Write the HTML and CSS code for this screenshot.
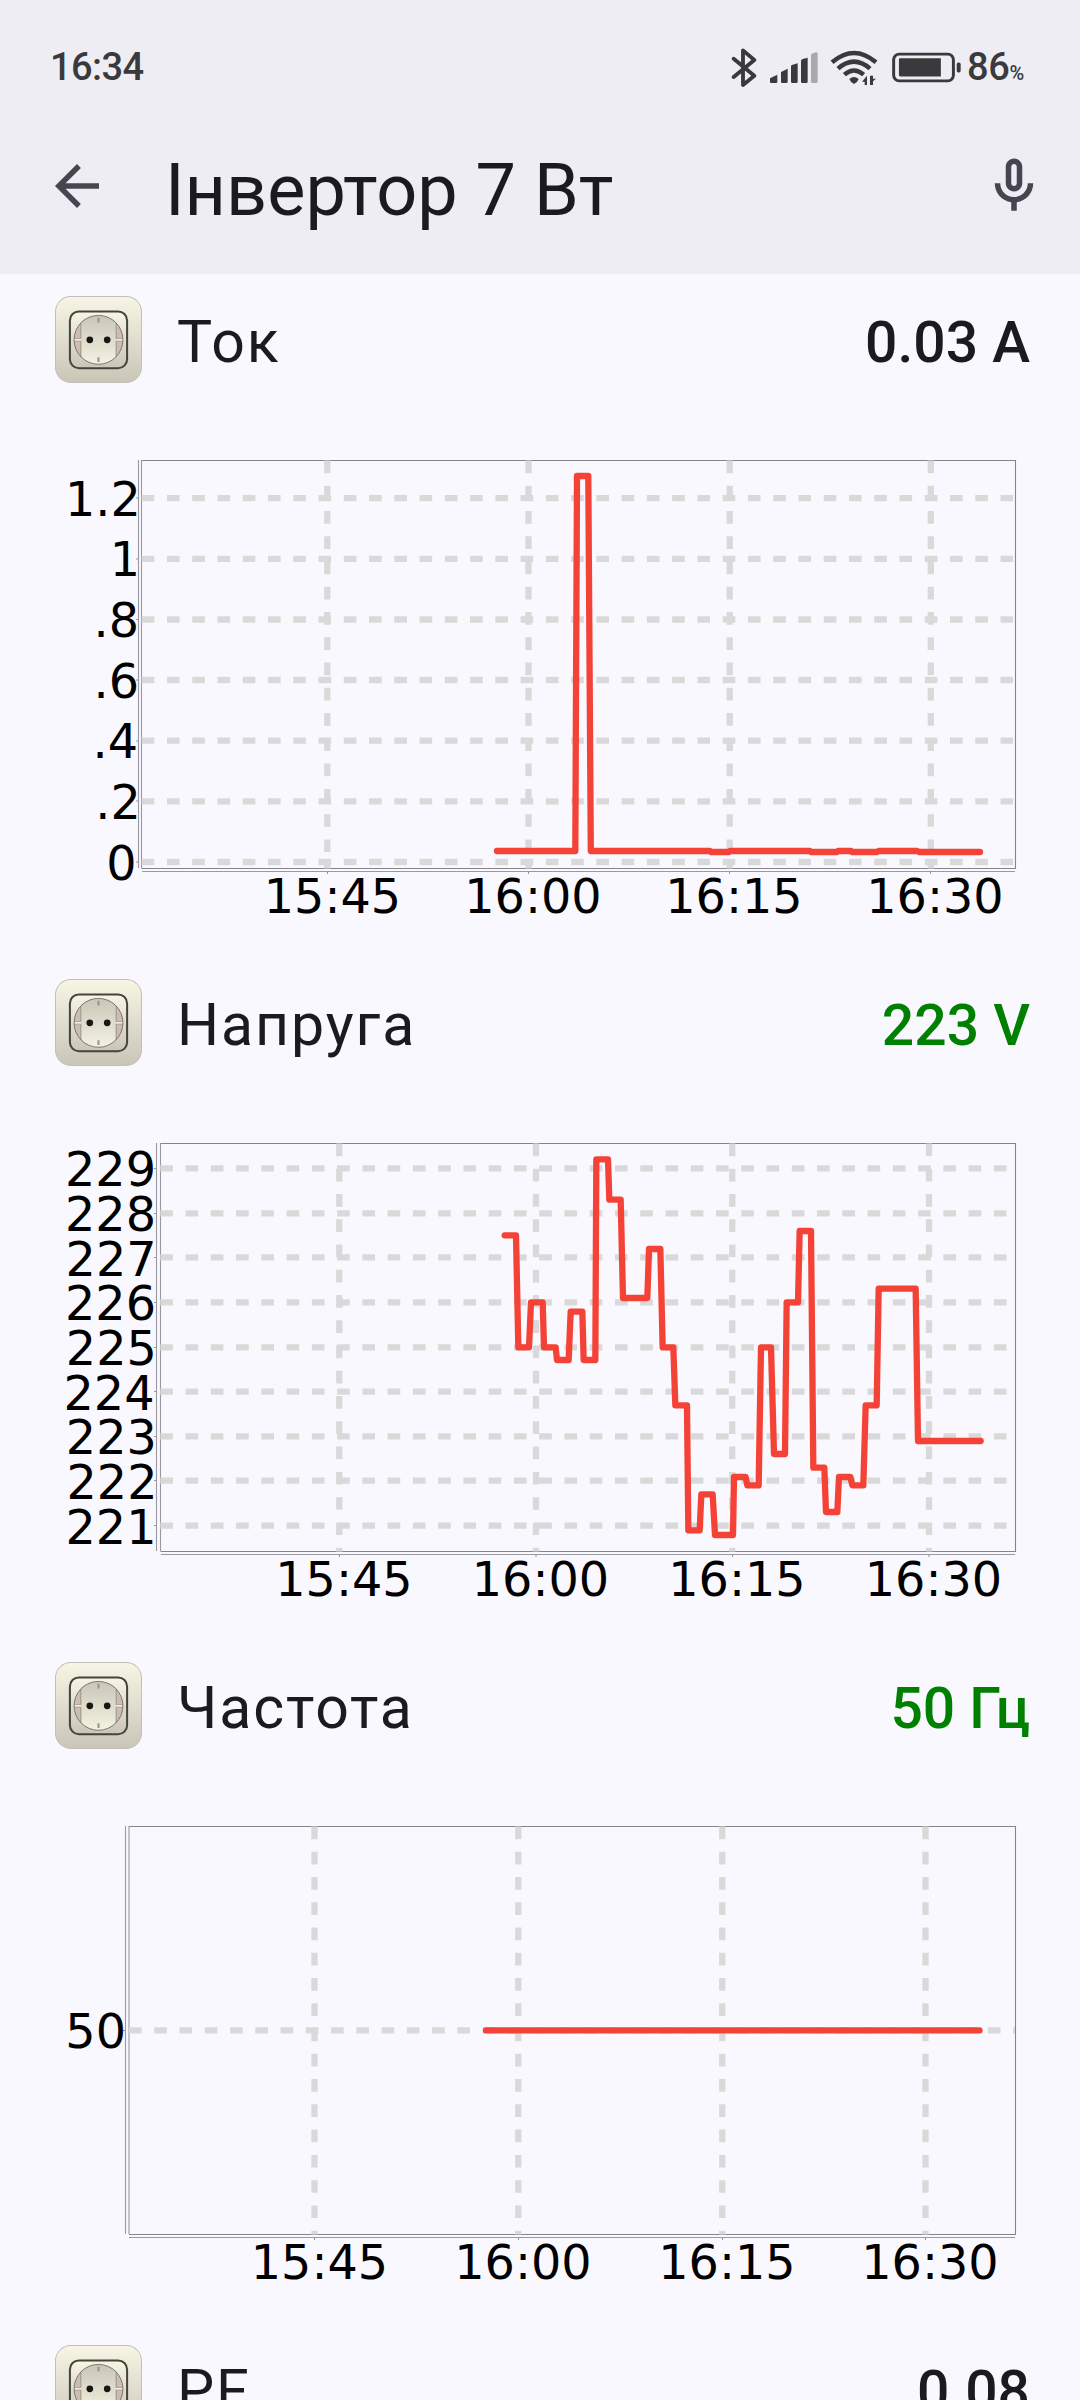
FILE: index.html
```
<!DOCTYPE html>
<html lang="uk">
<head>
<meta charset="utf-8">
<title>Інвертор 7 Вт</title>
<link rel="stylesheet" href="styles.css">
</head>
<body>
<svg class="defs" width="0" height="0" aria-hidden="true">
  <defs>
    <linearGradient id="plate" x1="0" y1="0" x2="0" y2="1"><stop offset="0" stop-color="#f7f5e4"/><stop offset="1" stop-color="#c9c6b8"/></linearGradient>
    <linearGradient id="well" x1="0" y1="0" x2="0" y2="1"><stop offset="0" stop-color="#c9c6b8"/><stop offset="1" stop-color="#f4f2e1"/></linearGradient>
    <clipPath id="round"><circle cx="130" cy="131" r="73"/></clipPath>
    <symbol id="socket" viewBox="0 0 260 260">
      <rect x="1.5" y="1.5" width="257" height="257" rx="46" fill="url(#plate)" stroke="#c4beb8" stroke-width="3"/>
      <rect x="44.500" y="46" width="171" height="170" rx="27" fill="url(#plate)" stroke="#46433a" stroke-width="6"/>
      <g clip-path="url(#round)">
        <rect x="57" y="58" width="146" height="146" fill="#cbbdb0"/>
        <path d="M77 58v146M183 58v146" stroke="#aaa192" stroke-width="3"/>
        <rect x="79" y="58" width="102" height="146" fill="url(#well)"/>
        <path d="M57 131h22M181 131h22" stroke="#f0edde" stroke-width="5"/>
        <path d="M57 127h20v-60M57 135h20v60M203 127h-20v-60M203 135h-20v60" fill="none" stroke="#a69c8f" stroke-width="2"/>
      </g>
      <circle cx="130" cy="131" r="73" fill="none" stroke="#6b665c" stroke-width="2.500"/>
      <path d="M130 65v14M130 183v14" stroke="#96938e" stroke-width="6"/>
      <circle cx="104" cy="131" r="10" fill="#171717"/><circle cx="156" cy="131" r="10" fill="#171717"/>
    </symbol>
  </defs>
</svg>

<header class="top">
  <div class="status">
    <span class="clock">16:34</span>
    <div class="indicators">
      <svg class="bt" viewBox="90 45 78 123"><path d="M98 80L160 131L126 159V55L160 84L98 135" fill="none" stroke="#3a3a3c" stroke-width="11.500" stroke-linejoin="round" stroke-linecap="round"/></svg>
      <svg class="signal" viewBox="205 60 147 99"><g fill="#3a3a3c"><path d="M208 142l22-11v21q0 4-4 4h-14q-4 0-4-4z"/><path d="M241 123l20-10v39q0 4-4 4h-12q-4 0-4-4z"/><path d="M271 105q0-3 5-4l15-4v55q0 4-4 4h-12q-4 0-4-4z"/><path d="M301 90q0-4 5-6l15-4v72q0 4-4 4h-12q-4 0-4-4z"/></g><path d="M331 74q0-5 5-7l10-3q5 0 5 3v85q0 4-4 4h-12q-4 0-4-4z" fill="#a9a9ac"/></svg>
      <svg class="wifi" viewBox="387 54 144 111"><g fill="none" stroke="#3a3a3c" stroke-width="13.500"><path d="M393 94Q459 38 525 94"/><path d="M411 113Q459 71 507 113"/><path d="M430 131Q459 106 488 131"/></g><path d="M445 144q14-12 28 0q-2 8-14 15q-12-7-14-15z" fill="#3a3a3c"/><path d="M498 134v28h-7v-10h-8zM507 162v-28h9v9h9l-9 8v11z" fill="#3a3a3c"/></svg>
      <svg class="battery" viewBox="572 62 209 92"><rect x="577" y="67.500" width="181" height="81" rx="17" fill="none" stroke="#3a3a3c" stroke-width="9"/><path d="M597 80h123v55h-123q-4 0-4-4v-47q0-4 4-4z" fill="#3a3a3c"/><rect x="768" y="93" width="12" height="30" rx="5" fill="#3a3a3c"/></svg>
      <span class="level">86<small>%</small></span>
    </div>
  </div>
  <div class="appbar">
    <svg class="icon" viewBox="0 0 24 24"><path d="M20 11H7.830l5.590-5.590L12 4l-8 8 8 8 1.410-1.410L7.830 13H20v-2z"/></svg>
    <h1>Інвертор 7 Вт</h1>
    <svg class="icon" viewBox="0 0 24 24"><path d="M12 14c1.660 0 3-1.340 3-3V5c0-1.660-1.340-3-3-3S9 3.340 9 5v6c0 1.660 1.340 3 3 3zm-1-9c0-.55.45-1 1-1s1 .45 1 1v6c0 .55-.45 1-1 1s-1-.45-1-1V5zm6 6c0 2.760-2.240 5-5 5s-5-2.240-5-5H5c0 3.530 2.610 6.430 6 6.920V21h2v-3.080c3.390-.49 6-3.390 6-6.920h-2z"/></svg>
  </div>
</header>

<main>
  <section class="item">
    <div class="row"><svg class="socket"><use href="#socket"/></svg><h2>Ток</h2><span class="value">0.03 A</span></div>
    <svg class="chart" viewBox="0 405 1080 552">
      <path class="frame" d="M141.500 460.500H1015.500V868.500H141.500"/>
      <path class="axis" d="M138.500 460V868M141.500 460V868M142 871.500H1015M136 498h2M136 559h2M136 619.500h2M136 680h2M136 741h2M136 801h2M136 862h2M327.500 871v3M528.500 871v3M729.500 871v3M930.500 871v3"/>
      <path class="grid" d="M141.700 498.200H1015M141.700 558.800H1015M141.700 619.500H1015M141.700 680H1015M141.700 740.700H1015M141.700 801.300H1015M141.700 862H1015M327.300 460.500V868.500M528.500 460.500V868.500M729.700 460.500V868.500M930.800 460.500V868.500"/>
      <path class="series" d="M497 851H575.300L577 476H588.300L590.800 851H710L711 852H729L730 851H810L811 852H837L838 851H851L852 852H877L878.500 851H917.500L919 852H980"/>
      <g class="ylab"><text x="140.800" y="515.700">1.2</text><text x="140" y="576">1</text><text x="139" y="637">.8</text><text x="139" y="697.500">.6</text><text x="138" y="757.700">.4</text><text x="140.800" y="818.700">.2</text><text x="136.500" y="879.500">0</text></g>
      <g class="xlab"><text x="332.500" y="912.700">15:45</text><text x="533" y="912.700">16:00</text><text x="734" y="912.700">16:15</text><text x="935" y="912.700">16:30</text></g>
    </svg>
  </section>

  <section class="item">
    <div class="row"><svg class="socket"><use href="#socket"/></svg><h2>Напруга</h2><span class="value ok">223 V</span></div>
    <svg class="chart" viewBox="0 1088 1080 552">
      <path class="frame" d="M160.500 1143.500H1015.500V1551.500H160.500"/>
      <path class="axis" d="M156.500 1143V1551M160.500 1143V1551M161 1554.500H1015M154 1168.500h2M154 1213.500h2M154 1257.500h2M154 1302.500h2M154 1347.500h2M154 1391.500h2M154 1436.500h2M154 1480.500h2M154 1525.500h2M339.500 1554v3M536 1554v3M732.500 1554v3M929 1554v3"/>
      <path class="grid" d="M160.300 1168.300H1015M160.300 1213.300H1015M160.300 1257.300H1015M160.300 1302.300H1015M160.300 1347.300H1015M160.300 1391.700H1015M160.300 1436.300H1015M160.300 1480.700H1015M160.300 1525.700H1015M339.300 1143.500V1551.500M536 1143.500V1551.500M732.300 1143.500V1551.500M929 1143.500V1551.500"/>
      <g transform="translate(540 1120) scale(.33333)"><path class="series fine" d="M-106 346H-72L-65 682H-33L-27 547H8L12 682H47L51 720H86L92 575H127L131 720H166L169 118H204L208 239H242L249 534H322L327 387H361L368 682H400L406 856H441L445 1231H479L484 1123H518L525 1245H579L582 1071H617L622 1096H656L663 682H693L702 1002H735L740 547H774L779 333H813L820 1043H853L858 1176H892L897 1071H931L937 1096H970L977 856H1010L1016 506H1127L1134 963H1322"/></g>
      <g class="ylab"><text x="156" y="1186.300">229</text><text x="156" y="1231">228</text><text x="156.600" y="1275.500">227</text><text x="156" y="1320.300">226</text><text x="156.900" y="1365">225</text><text x="154.500" y="1409.500">224</text><text x="156.900" y="1454.300">223</text><text x="157.500" y="1498.700">222</text><text x="156.500" y="1543.500">221</text></g>
      <g class="xlab"><text x="344" y="1596">15:45</text><text x="540.500" y="1596">16:00</text><text x="737" y="1596">16:15</text><text x="933.500" y="1596">16:30</text></g>
    </svg>
  </section>

  <section class="item">
    <div class="row"><svg class="socket"><use href="#socket"/></svg><h2>Частота</h2><span class="value ok">50 Гц</span></div>
    <svg class="chart" viewBox="0 1771 1080 552">
      <path class="frame" d="M129 1826.500H1015.500V2234.500H129"/>
      <path class="axis" d="M125.500 1826V2234M129 1826V2234M129 2237.500H1015M123 2030.500h2M314.500 2237v3M518.500 2237v3M722.500 2237v3M925.500 2237v3"/>
      <path class="grid" d="M129 2030.400H1015M314.500 1826.500V2234.500M518.300 1826.500V2234.500M722.300 1826.500V2234.500M925.500 1826.500V2234.500"/>
      <path class="series" d="M486 2030.400H979.500"/>
      <g class="ylab"><text x="126" y="2048.300">50</text></g>
      <g class="xlab"><text x="319.500" y="2279">15:45</text><text x="523" y="2279">16:00</text><text x="727" y="2279">16:15</text><text x="930" y="2279">16:30</text></g>
    </svg>
  </section>

  <section class="item">
    <div class="row"><svg class="socket"><use href="#socket"/></svg><h2>PF</h2><span class="value">0.08</span></div>
  </section>
</main>
</body>
</html>
```
FILE: styles.css
```
* { box-sizing: border-box; }

body {
  margin: 0;
  width: 1080px;
  height: 2400px;
  overflow: hidden;
  background: #f9f8ff;
  color: #1a1b20;
  font-family: Roboto, sans-serif;
}

svg { display: block; flex: none; }
.defs { height: 0; }

.top {
  height: 274px;
  background: #eeedf3;
}

.status {
  display: flex;
  justify-content: space-between;
  align-items: center;
  height: 134px;
  padding: 0 56px 0 50px;
  color: #3a3a3c;
  font-size: 38px;
  font-weight: 500;
}

.clock { letter-spacing: -.6px; }
.indicators { display: flex; align-items: center; }
.bt { width: 26px; height: 41px; margin-right: 12px; }
.signal { width: 49px; height: 33px; margin-right: 12px; }
.wifi { width: 48px; height: 37px; margin-right: 14px; }
.battery { width: 69px; height: 31px; margin-right: 6px; }
.level { letter-spacing: -.3px; }
.level small { font-size: 20px; }

.appbar {
  display: flex;
  align-items: center;
  height: 104px;
  padding: 0 33px 0 44px;
}

.appbar h1 {
  flex: 1;
  margin: 0;
  padding: 9px 0 0 55px;
  font-size: 72px;
  font-weight: 400;
  line-height: 84px;
}

.icon { width: 66px; height: 66px; fill: #454650; }

main { height: 2126px; overflow: hidden; }
.item { height: 683px; }
.item:last-child { height: 77px; }

.row {
  display: flex;
  align-items: center;
  height: 131px;
  padding: 0 50px 0 55px;
}

.socket { width: 87px; height: 87px; }

.row h2 {
  flex: 1;
  margin: 0;
  padding: 4px 0 0 35px;
  font-size: 59px;
  font-weight: 400;
  letter-spacing: 1.900px;
  line-height: 70px;
}

.value {
  padding-top: 7px;
  font-size: 57px;
  font-weight: 500;
  line-height: 70px;
}

.ok { color: #008000; }

.chart { width: 1080px; height: 552px; }
.chart text { font: 47.700px "DejaVu Sans", sans-serif; fill: #000; }
.frame { fill: none; stroke: #85848b; stroke-width: 1.100; }
.axis { fill: none; stroke: #9a99a1; stroke-width: 1.100; }
.grid { fill: none; stroke: #d9d9d9; stroke-width: 6.300; stroke-dasharray: 12.630; }
.series { fill: none; stroke: #f44336; stroke-width: 6.300; stroke-linecap: round; stroke-linejoin: round; }
.fine { stroke-width: 18.900; }
.ylab { text-anchor: end; }
.xlab { text-anchor: middle; }
```
